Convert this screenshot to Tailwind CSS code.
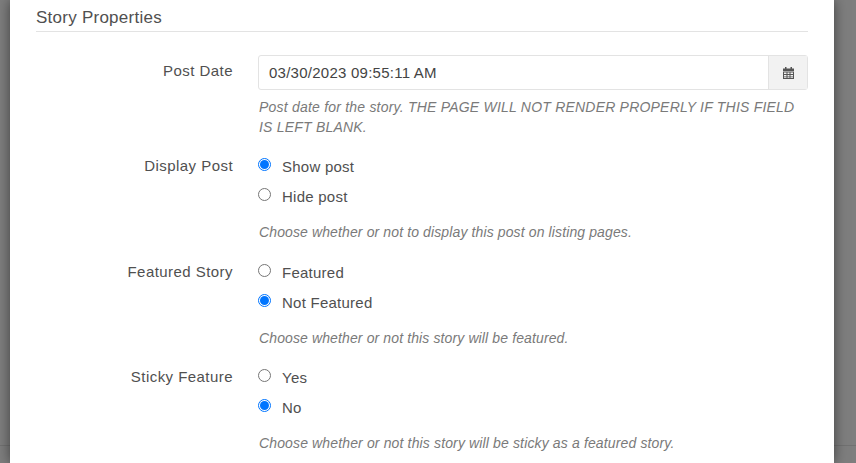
<!DOCTYPE html>
<html lang="en">
<head>
  <meta charset="UTF-8" />
  <title>Story Properties</title>
  <script src="https://cdn.jsdelivr.net/npm/@tailwindcss/browser@4"></script>
</head>
<body class="relative bg-[#7e7e7e] h-[463px] overflow-hidden font-['Liberation_Sans',Arial,sans-serif]">

  <!-- faint edge of the page behind the backdrop -->
  <div class="absolute top-[445px] left-0 w-full h-px bg-black/10"></div>

  <div class="relative ml-[10px] w-[824px] h-[463px] bg-white px-[26px] shadow-[0_0_12px_rgba(0,0,0,0.5)] overflow-hidden">
    <h2 class="h-[32px] pt-[8px] text-[17px] leading-[20px] text-[#505050] border-b border-[#e3e3e3] tracking-[0.25px]">Story Properties</h2>

    <div class="grid grid-cols-[197px_550px] gap-x-[25px] mt-[23px] text-[15px] tracking-[0.25px] text-[#505050]">
      <div class="text-right leading-[20px] pt-[6px] tracking-[0.45px]">Post Date</div>
      <div>
        <div class="flex h-[35px] border border-[#e3e3e3] rounded-[3px]">
          <div class="flex-1 px-[10px] leading-[34px] text-[#444]">03/30/2023 09:55:11 AM</div>
          <div class="w-[39px] flex items-center justify-center bg-[#f2f2f2] border-l border-[#e3e3e3]">
            <svg width="11" height="12" viewBox="0 0 11 12" fill="#555">
              <path d="M2 0h1.500v1.500h4V0H9v1.500h2V4H0V1.500h2z" />
              <path d="M0 4.500h11V12H0zM1 5.500v1.500h2.500V5.500zM4.500 5.500v1.500h2V5.500zM7.500 5.500v1.500H10V5.500zM1 8v1.500h2.500V8zM4.500 8v1.500h2V8zM7.500 8v1.500H10V8zM1 10.300V11h2.500v-.7zM4.500 10.300V11h2v-.7zM7.500 10.300V11H10v-.7z" fill-rule="evenodd" />
            </svg>
          </div>
        </div>
        <p class="mt-[7px] pl-px pr-[4px] text-[14px] leading-[20px] italic text-[#7a7a7a] tracking-[0.21px]">Post date for the story. THE PAGE WILL NOT RENDER PROPERLY IF THIS FIELD IS LEFT BLANK.</p>
      </div>

      <div class="text-right leading-[20px] mt-[19px] tracking-[0.45px]">Display Post</div>
      <div class="mt-[20px]">
        <div class="flex items-center h-[20px] gap-[11px]">
          <span class="w-[13px] h-[13px] -mt-[5px] rounded-full border border-[#0075ff] flex items-center justify-center"><span class="w-[9px] h-[9px] rounded-full bg-[#0075ff]"></span></span>
          <span>Show post</span>
        </div>
        <div class="flex items-center h-[20px] gap-[11px] mt-[10px]">
          <span class="w-[13px] h-[13px] -mt-[5px] rounded-full border border-[#767676]"></span>
          <span>Hide post</span>
        </div>
        <p class="mt-[15px] pl-px text-[14px] leading-[20px] italic text-[#7a7a7a] tracking-[0.12px]">Choose whether or not to display this post on listing pages.</p>
      </div>

      <div class="text-right leading-[20px] mt-[20px] tracking-[0.45px]">Featured Story</div>
      <div class="mt-[21px]">
        <div class="flex items-center h-[20px] gap-[11px]">
          <span class="w-[13px] h-[13px] -mt-[5px] rounded-full border border-[#767676]"></span>
          <span>Featured</span>
        </div>
        <div class="flex items-center h-[20px] gap-[11px] mt-[10px]">
          <span class="w-[13px] h-[13px] -mt-[5px] rounded-full border border-[#0075ff] flex items-center justify-center"><span class="w-[9px] h-[9px] rounded-full bg-[#0075ff]"></span></span>
          <span>Not Featured</span>
        </div>
        <p class="mt-[15px] pl-px text-[14px] leading-[20px] italic text-[#7a7a7a] tracking-[0.12px]">Choose whether or not this story will be featured.</p>
      </div>

      <div class="text-right leading-[20px] mt-[19px] tracking-[0.45px]">Sticky Feature</div>
      <div class="mt-[20px]">
        <div class="flex items-center h-[20px] gap-[11px]">
          <span class="w-[13px] h-[13px] -mt-[5px] rounded-full border border-[#767676]"></span>
          <span>Yes</span>
        </div>
        <div class="flex items-center h-[20px] gap-[11px] mt-[10px]">
          <span class="w-[13px] h-[13px] -mt-[5px] rounded-full border border-[#0075ff] flex items-center justify-center"><span class="w-[9px] h-[9px] rounded-full bg-[#0075ff]"></span></span>
          <span>No</span>
        </div>
        <p class="mt-[15px] pl-px text-[14px] leading-[20px] italic text-[#7a7a7a] tracking-[0.14px]">Choose whether or not this story will be sticky as a featured story.</p>
      </div>
    </div>
  </div>

</body>
</html>
